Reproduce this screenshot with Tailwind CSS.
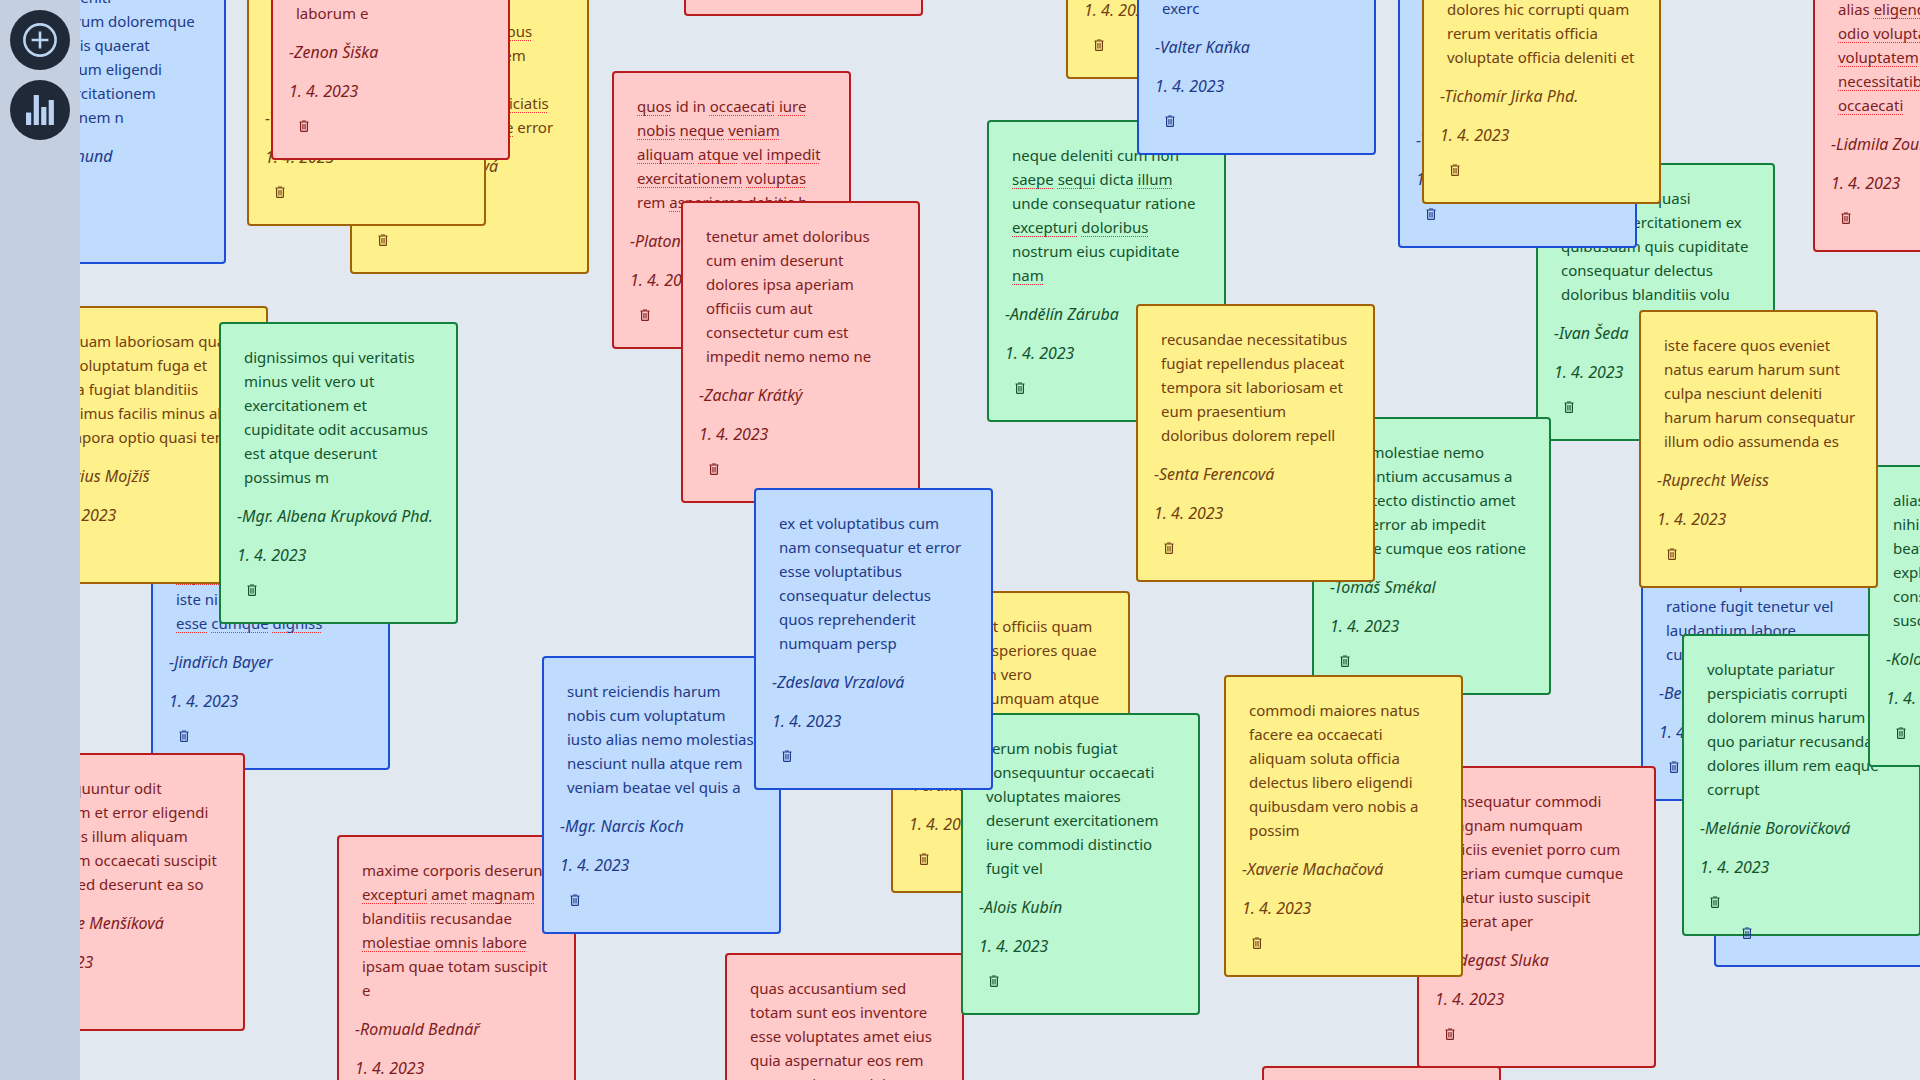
<!DOCTYPE html>
<html lang="cs">
<head>
<meta charset="utf-8">
<meta name="viewport" content="width=device-width, initial-scale=1">
<title>Board</title>
<script src="https://cdn.jsdelivr.net/npm/@tailwindcss/browser@4"></script>
</head>
<body class="flex h-screen overflow-hidden bg-[#e2e8f0] font-['Noto_Sans',sans-serif]">
<nav aria-label="Tools" class="flex w-20 shrink-0 flex-col items-center gap-2.5 bg-[#c4d0e0] py-2.5">
  <button type="button" aria-label="Add note" class="flex size-15 items-center justify-center rounded-full bg-[#1f2937] text-[#bcd2f2]">
    <svg class="size-9" viewBox="0 0 36 36" fill="none" stroke="currentColor" stroke-width="2.6"><circle cx="18" cy="18" r="15.6"/><path d="M18 9.6v16.8M9.6 18h16.8"/></svg>
  </button>
  <button type="button" aria-label="Statistics" class="flex size-15 items-center justify-center rounded-full bg-[#1f2937] text-[#bcd2f2]">
    <svg class="size-9" viewBox="0 0 36 36" fill="currentColor"><rect x="4" y="20.500" width="5.200" height="12.500" rx=".5"/><rect x="11.700" y="3" width="5.200" height="30" rx=".5"/><rect x="19.200" y="15" width="5.200" height="18" rx=".5"/><rect x="26.700" y="8" width="5.200" height="25" rx=".5"/></svg>
  </button>
</nav>
<main id="board" class="relative min-w-0 flex-1 overflow-hidden"></main>
<script>
const tones = {
  blue: 'bg-[#bfdbfe] border-[#1d4ed8] text-[#1e3a8a]',
  yellow: 'bg-[#fef08a] border-[#a16207] text-[#713f12]',
  red: 'bg-[#fecaca] border-[#b91c1c] text-[#7f1d1d]',
  green: 'bg-[#bbf7d0] border-[#15803d] text-[#14532d]',
};
// tone, left, top, text (a word in _underscores_ is flagged by the spell checker), author, raised delete button
const notes = [
  ['blue', -93, -38, 'ipsam deleniti\nquo dolorum doloremque\nquo debitis quaerat\nnatus earum eligendi\nnulla exercitationem\nnihil rationem n', '-Edita Zikmund'],
  ['yellow', 270, -4, 'minima et _temporibus_\nsaepe exercitationem\nvero nulla\nrepudiandae _perspiciatis_\nconsequuntur _quae_ error', '-Blanka Kadlecová'],
  ['yellow', 167, -52, 'quia\nmodi\nvero\nnulla\nautem', '-Tomáš Kos'],
  ['red', 191, -118, 'quia\nmodi\nvero\nnulla\nlaborum e', '-Zenon Šiška'],
  ['red', 604, -262, 'quia\nmodi\nvero\nnulla\nautem', '-Jan Novák'],
  ['red', 532, 71, '_quos_ id in _occaecati_ _iure_\n_nobis_ _neque_ _veniam_\n_aliquam_ _atque_ _vel_ _impedit_\n_exercitationem_ _voluptas_\nrem _asperiores_ _debitis_ b', '-Platon Kos'],
  ['red', 601, 201, 'tenetur amet doloribus\ncum enim deserunt\ndolores ipsa aperiam\nofficiis cum aut\nconsectetur cum est\nimpedit nemo nemo ne', '-Zachar Krátký'],
  ['red', 257, 835, 'maxime corporis deserunt\n_excepturi_ _amet_ _magnam_\nblanditiis recusandae\n_molestiae_ _omnis_ _labore_\nipsam quae totam suscipit\ne', '-Romuald Bednář'],
  ['blue', 462, 656, 'sunt reiciendis harum\nnobis cum voluptatum\niusto alias nemo molestias\nnesciunt nulla atque rem\nveniam beatae vel quis a', '-Mgr. Narcis Koch'],
  ['yellow', 811, 591, 'similique ut officiis quam\ndeserunt asperiores quae\nvoluptatem vero\nomnis et numquam atque\nquia\nmodi', '-Ferdinand Holý'],
  ['red', 645, 953, 'quas accusantium sed\ntotam sunt eos inventore\nesse voluptates amet eius\nquia aspernatur eos rem\naccusantium ea del', '-Jan Novák'],
  ['green', 881, 713, 'rerum nobis fugiat\nconsequuntur occaecati\nvoluptates maiores\ndeserunt exercitationem\niure commodi distinctio\nfugit vel', '-Alois Kubín'],
  ['blue', 674, 488, 'ex et voluptatibus cum\nnam consequatur et error\nesse voluptatibus\nconsequatur delectus\nquos reprehenderit\nnumquam persp', '-Zdeslava Vrzalová'],
  ['blue', 71, 468, 'quia\nmodi\nvero\n_aspernatur_\niste nihil\n_esse_ _cumque_ _digniss_', '-Jindřich Bayer'],
  ['yellow', -51, 306, 'aliquam laboriosam quas\net voluptatum fuga et\nquia fugiat blanditiis\nducimus facilis minus ab\ntempora optio quasi tem', '-Flavius Mojžíš'],
  ['green', 139, 322, 'dignissimos qui veritatis\nminus velit vero ut\nexercitationem et\ncupiditate odit accusamus\nest atque deserunt\npossimus m', '-Mgr. Albena Krupková Phd.'],
  ['red', -74, 753, 'consequuntur odit\ndolorem et error eligendi\nmaiores illum aliquam\ndolorem occaecati suscipit\nquae sed deserunt ea so', '-Melánie Menšíková'],
  ['yellow', 986, -199, 'quia\nmodi\nvero\nnulla\nautem', '-Jan Novák'],
  ['green', 907, 120, 'neque deleniti cum non\n_saepe_ _sequi_ dicta _illum_\nunde consequatur ratione\n_excepturi_ _doloribus_\nnostrum eius cupiditate\n_nam_', '-Andělín Záruba'],
  ['blue', 1057, -123, 'quia\nmodi\nvero\nnulla\nexerc', '-Valter Kaňka'],
  ['green', 1456, 163, 'voluptatibus quasi\nveniam exercitationem ex\nquibusdam quis cupiditate\nconsequatur delectus\ndoloribus blanditiis volu', '-Ivan Šeda'],
  ['green', 1232, 417, 'quis molestiae nemo\nlaudantium accusamus a\narchitecto distinctio amet\nquis error ab impedit\nneque cumque eos ratione', '-Tomáš Smékal'],
  ['yellow', 1056, 304, 'recusandae necessitatibus\nfugiat repellendus placeat\ntempora sit laboriosam et\neum praesentium\ndoloribus dolorem repell', '-Senta Ferencová'],
  ['blue', 1318, -30, 'quia\nmodi\nvero\nnulla\nautem', '-Tomáš Kos'],
  ['yellow', 1342, -74, 'quia\nmodi\ndolores hic corrupti quam\nrerum veritatis officia\nvoluptate officia deleniti et', '-Tichomír Jirka Phd.'],
  ['red', 1182, 1066, 'quia\nmodi\nvero\nnulla\nautem', '-Jan Novák'],
  ['blue', 1561, 499, 'quia\nmodi\naut iure repellat et officiis\nratione fugit tenetur vel\nlaudantium labore\ncumque', '-Berta Malá'],
  ['red', 1337, 766, 'consequatur commodi\nmagnam numquam\nofficiis eveniet porro cum\naperiam cumque cumque\ntenetur iusto suscipit\nquaerat aper', '-Radegast Sluka'],
  ['yellow', 1144, 675, 'commodi maiores natus\nfacere ea occaecati\naliquam soluta officia\ndelectus libero eligendi\nquibusdam vero nobis a\npossim', '-Xaverie Machačová'],
  ['blue', 1634, 689, 'quia\nmodi\nvero\nnulla\nautem', '-Jan Novák', true],
  ['green', 1602, 634, 'voluptate pariatur\nperspiciatis corrupti\ndolorem minus harum in\nquo pariatur recusandae\ndolores illum rem eaque\ncorrupt', '-Melánie Borovičková'],
  ['green', 1788, 465, 'alias quia\nnihil modi\nbeatae vero\nexplicabo\nconsequatur\nsuscipit', '-Koloman Bílý'],
  ['yellow', 1559, 310, 'iste facere quos eveniet\nnatus earum harum sunt\nculpa nesciunt deleniti\nharum harum consequatur\nillum odio assumenda es', '-Ruprecht Weiss'],
  ['red', 1733, -26, 'alias _eligendi_\n_odio_ _voluptas_\n_voluptatem_\n_necessitatibus_\n_occaecati_', '-Lidmila Zoubková'],
];
const flagged = '<span class="underline decoration-dotted decoration-red-500 decoration-1 underline-offset-3 [text-decoration-skip-ink:none]">$1</span>';
document.getElementById('board').innerHTML = notes.map(([tone, left, top, text, author, raised]) => `
  <article class="absolute flex w-[239px] flex-col items-start rounded-sm border-2 pt-[21px] pb-[26px] ${tones[tone]}" style="left:${left}px;top:${top}px">
    <p class="ml-[23px] text-[15px] leading-6 whitespace-pre">${text.replace(/_([^_]+)_/g, flagged)}</p>
    <p class="mt-[15px] ml-4 text-base leading-6 whitespace-nowrap italic">${author}</p>
    <p class="mt-[15px] ml-4 text-base leading-6 italic">1. 4. 2023</p>
    <button type="button" aria-label="Delete note" class="${raised ? 'relative z-10' : ''} mt-[17px] ml-[26px]">
      <svg class="h-3 w-2.5" viewBox="0 0 10 12" fill="none" stroke="currentColor"><path d="M.5 2h9M3 1h4" stroke-width="1"/><path d="M1.600 2v8.500q0 .9.9.9h5q.9 0 .9-.9V2" stroke-width="1.200"/><path d="M3.700 4v5.500M5 4v5.500M6.300 4v5.500" stroke-width=".8"/></svg>
    </button>
  </article>`).join('');
</script>
</body>
</html>
